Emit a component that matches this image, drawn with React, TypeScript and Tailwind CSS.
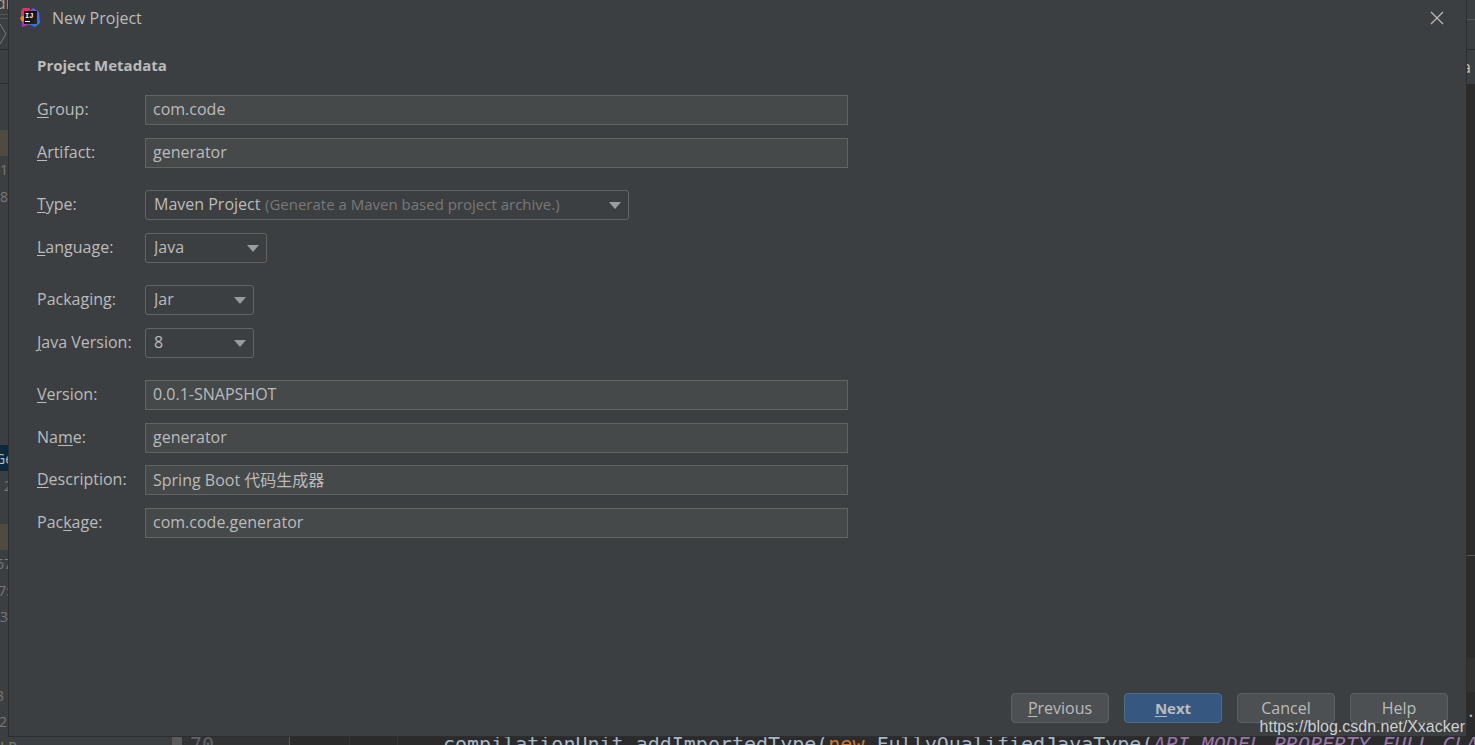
import { ReactNode } from "react"

const UI_FONT = "font-['Open_Sans','Noto_Sans_CJK_SC',sans-serif]"

// rows of the project tree that stick out left of the dialog
const treeRows = [
  { text: "", style: "bg-[#4f4b41]" },
  { text: "1", style: "justify-start" },
  { text: ".8", style: "justify-end" },
  ...Array.from({ length: 9 }, () => ({ text: "", style: "" })),
  { text: "Ge", style: "justify-center bg-[#0d293e] text-[#bbbbbb]" },
  { text: "2", style: "justify-start pl-1" },
  { text: "", style: "" },
  { text: "", style: "bg-[#4f4b41]" },
  { text: "67", style: "justify-center" },
  { text: "7:", style: "justify-center" },
  { text: ".3", style: "justify-end" },
  { text: "", style: "" },
  { text: "", style: "" },
  { text: "3", style: "justify-end pr-1" },
  { text: "2", style: "justify-end pr-px" },
]

function Logo() {
  return (
    <svg width="20" height="20" viewBox="0 0 20 20" aria-hidden="true">
      <defs>
        <linearGradient id="ij-blue" x1="0" y1="0" x2="0" y2="1">
          <stop offset="0" stopColor="#6b57e0" />
          <stop offset="1" stopColor="#1f7cf5" />
        </linearGradient>
        <linearGradient id="ij-red" x1="0" y1="0" x2="1" y2="1">
          <stop offset="0" stopColor="#fe2857" />
          <stop offset="1" stopColor="#d02a90" />
        </linearGradient>
        <linearGradient id="ij-box" x1="0" y1="0" x2="1" y2="1">
          <stop offset="0" stopColor="#000000" />
          <stop offset="1" stopColor="#2a2a2e" />
        </linearGradient>
      </defs>
      <path d="M1 3L3 0H9L12 4L9 9L1 9Z" fill="url(#ij-red)" />
      <path d="M0 10L2 8L5 8L5 14L2 14Z" fill="#fc801d" />
      <path d="M2 14L5 12L12 15L8 17L2 19Z" fill="#a436c4" />
      <path d="M9 4L13 0L19 4L20 15L15 19L8 16Z" fill="url(#ij-blue)" />
      <rect x="4" y="3" width="13" height="13" fill="url(#ij-box)" />
      <text x="5" y="10" fontSize="7" fontWeight="700" fontFamily="Liberation Mono, monospace" fill="#ffffff">
        IJ
      </text>
      <rect x="5" y="13" width="5" height="1" fill="#ffffff" />
    </svg>
  )
}

// label text with its mnemonic letter underlined, e.g. "Pac_k_age:"
function Mnemonic({ text }: { text: string }) {
  const [before, key, after] = text.split("_")
  return (
    <>
      {before}
      <span className="underline decoration-1 underline-offset-2">{key}</span>
      {after}
    </>
  )
}

function Row({ id, label, children }: { id: string; label: string; children: ReactNode }) {
  return (
    <div className="flex items-center">
      <label htmlFor={id} className="w-[108px] shrink-0 pb-0.5 whitespace-nowrap">
        <Mnemonic text={label} />
      </label>
      {children}
    </div>
  )
}

function TextRow({ id, label, value }: { id: string; label: string; value: string }) {
  return (
    <Row id={id} label={label}>
      <input
        id={id}
        type="text"
        defaultValue={value}
        className="h-[30px] w-[703px] min-w-0 border border-[#646464] bg-[#45494a] px-[7px] pb-0.5 outline-none focus:border-[#466d94]"
      />
    </Row>
  )
}

function SelectRow({ id, label, options, width, hint }: {
  id: string
  label: string
  options: string[]
  width: string
  hint?: string
}) {
  return (
    <Row id={id} label={label}>
      <div className={`relative ${width}`}>
        <select
          id={id}
          className="block h-[30px] w-full appearance-none rounded-[3px] border border-[#646464] bg-[#3c3f41] px-2 pb-0.5 outline-none"
        >
          {options.map((option) => (
            <option key={option}>{option}</option>
          ))}
        </select>
        {hint && (
          <span className="pointer-events-none absolute inset-y-0 left-[120px] flex items-center pb-0.5 text-[15px] whitespace-nowrap text-[#787878]">
            {hint}
          </span>
        )}
        <svg
          className="pointer-events-none absolute top-3 right-2"
          width="12"
          height="7"
          viewBox="0 0 12 7"
          aria-hidden="true"
        >
          <path d="M0 0H12L6 7Z" fill="#9a9da0" />
        </svg>
      </div>
    </Row>
  )
}

function DialogButton({ label, primary }: { label: string; primary?: boolean }) {
  return (
    <button
      type="button"
      className={`h-[30px] w-[98px] rounded-[4px] border ${
        primary ? "border-[#4c708c] bg-[#365880] text-[15px] font-bold" : "border-[#5e6060] bg-[#4c5052]"
      }`}
    >
      <Mnemonic text={label} />
    </button>
  )
}

function LeftStrip() {
  return (
    <div className="flex w-2 shrink-0 flex-col overflow-hidden bg-[#3c3f41] text-sm text-[#787878]">
      <div className="flex h-[15px] items-center justify-center border-b border-[#555555] pb-2 text-base text-[#b09a86]">dr</div>
      <div className="h-1 border-b border-[#555555]" />
      <div className="flex h-[31px] items-center border-b border-[#2b2b2b]">
        <svg width="7" height="20" viewBox="0 0 7 20" aria-hidden="true">
          <path d="M0 0L6 10L0 20" fill="none" stroke="#787878" />
        </svg>
      </div>
      <div className="h-[34px] border-b border-[#2b2b2b]" />
      <div className="h-[46px]" />
      <div className="flex flex-1 flex-col pb-[3px]">
        {treeRows.map((row, i) => (
          <div key={i} className={`flex flex-1 items-center pt-0.5 ${row.style}`}>
            {row.text}
          </div>
        ))}
      </div>
    </div>
  )
}

function RightStrip() {
  return (
    <div className="flex w-2 shrink-0 flex-col overflow-hidden bg-[#2b2b2b] text-[#a9b7c6]">
      <div className="h-5 border-b border-[#555555] bg-[#3c3f41]" />
      <div className="h-[30px] border-b border-[#2b2b2b] bg-[#3c3f41]" />
      <div className="flex h-[34px] items-center justify-end bg-[#3c3f41] pr-1 text-[#d0c8a0]">a</div>
      <div className="flex-1 border-b border-[#555555]" />
      <div className="h-[102px]" />
      <div className="h-[34px] bg-[#323232]" />
      <div className="h-[45px] text-center text-xl leading-9">.</div>
    </div>
  )
}

function EditorStrip() {
  return (
    <div className="flex h-2 overflow-hidden bg-[#2b2b2b] font-['DejaVu_Sans_Mono',monospace] text-xl leading-[14px] whitespace-pre text-[#a9b7c6]">
      <div className="w-[172px] shrink-0 bg-[#3c3f41] text-sm leading-5 text-[#787878]">LB</div>
      <div className="w-[10px] shrink-0 bg-[#5a5a5a]" />
      <div className="w-[108px] shrink-0 border-r border-[#555555] bg-[#313335] pl-2 text-[#606366]">70</div>
      <div className="w-[60px] shrink-0 border-r border-[#373737]" />
      <div className="w-12 shrink-0 border-r border-[#373737]" />
      <code className="pl-[45px] font-['DejaVu_Sans_Mono',monospace]">
        compilationUnit.addImportedType(
        <span className="text-[#cc7832]">new</span>
        {" FullyQualifiedJavaType("}
        <span className="text-[#9876aa] italic">API_MODEL_PROPERTY_FULL_CLASS_NAME</span>
      </code>
    </div>
  )
}

export default function App() {
  return (
    <div className={`relative flex min-h-screen flex-col overflow-hidden bg-[#2b2b2b] text-base leading-5 text-[#bbbbbb] ${UI_FONT}`}>
      <div className="flex flex-1">
        <LeftStrip />
        <div
          role="dialog"
          aria-labelledby="dialog-title"
          className="flex min-w-0 flex-1 flex-col border border-t-0 border-[#2b2d2e] bg-[#3c3f41]"
        >
          <header className="flex h-9 items-center gap-3 pr-[18px] pl-[11px]">
            <Logo />
            <h1 id="dialog-title" className="flex-1">New Project</h1>
            <button type="button" aria-label="Close" className="p-1">
              <svg width="14" height="14" viewBox="0 0 14 14" aria-hidden="true">
                <path d="M1 1L13 13M13 1L1 13" fill="none" stroke="#bbbbbb" strokeWidth="1.2" />
              </svg>
            </button>
          </header>

          <form className="flex flex-1 flex-col pt-[19px] pl-7">
            <h2 className="mb-5 text-[15px] leading-5 font-bold">Project Metadata</h2>
            <div className="flex flex-col gap-[22px]">
              <div className="flex flex-col gap-[13px]">
                <TextRow id="group" label="_G_roup:" value="com.code" />
                <TextRow id="artifact" label="_A_rtifact:" value="generator" />
              </div>
              <div className="flex flex-col gap-[13px]">
                <SelectRow
                  id="type"
                  label="_T_ype:"
                  options={["Maven Project", "Gradle Project"]}
                  width="w-[484px]"
                  hint="(Generate a Maven based project archive.)"
                />
                <SelectRow id="language" label="_L_anguage:" options={["Java", "Kotlin", "Groovy"]} width="w-[122px]" />
              </div>
              <div className="flex flex-col gap-[13px]">
                <SelectRow id="packaging" label="Packa_g_ing:" options={["Jar", "War"]} width="w-[109px]" />
                <SelectRow id="java-version" label="_J_ava Version:" options={["8", "11", "14"]} width="w-[109px]" />
              </div>
              <div className="flex h-[158px] flex-col justify-between">
                <TextRow id="version" label="_V_ersion:" value="0.0.1-SNAPSHOT" />
                <TextRow id="name" label="Na_m_e:" value="generator" />
                <TextRow id="description" label="_D_escription:" value="Spring Boot 代码生成器" />
                <TextRow id="package" label="Pac_k_age:" value="com.code.generator" />
              </div>
            </div>
          </form>

          <footer className="flex justify-end gap-[15px] pr-[18px] pb-[13px]">
            <DialogButton label="_P_revious" />
            <DialogButton label="_N_ext" primary />
            <DialogButton label="Cancel" />
            <DialogButton label="Help" />
          </footer>
        </div>
        <RightStrip />
      </div>
      <EditorStrip />
      <span className="pointer-events-none absolute right-[10px] bottom-2 font-['Liberation_Sans',sans-serif] text-base leading-5 text-[#d0d0d0]">
        https://blog.csdn.net/Xxacker
      </span>
    </div>
  )
}
